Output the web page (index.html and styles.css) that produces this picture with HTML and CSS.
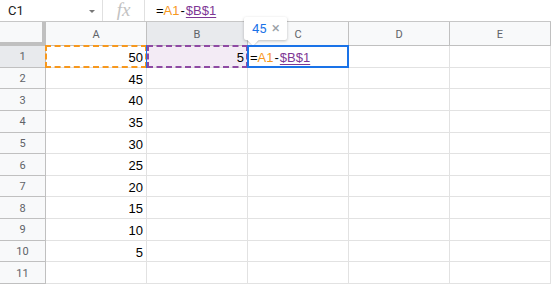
FILE: index.html
```html
<!DOCTYPE html>
<html lang="en">
<head>
    <meta charset="UTF-8">
    <meta name="viewport" content="width=device-width, initial-scale=1.0">
    <title>Sheet</title>
    <link rel="stylesheet" href="styles.css">
</head>
<body>

    <div class="formula-bar">
        <div class="name-box">
            <span>C1</span>
            <span class="caret"></span>
        </div>
        <div class="fx">fx</div>
        <div class="formula">=<span class="ref-a">A1</span><span class="minus">-</span><span class="ref-b">$B$1</span></div>
    </div>

    <div class="sheet">
        <div class="corner"></div>
        <div class="col-head">A</div>
        <div class="col-head active">B</div>
        <div class="col-head">C</div>
        <div class="col-head">D</div>
        <div class="col-head">E</div>

        <div class="row-head active">1</div>
        <div class="cell range-a">50</div>
        <div class="cell range-b">5</div>
        <div class="cell editing">
            =<span class="ref-a">A1</span><span class="minus">-</span><span class="ref-b">$B$1</span>
            <div class="tip"><span class="tip-value">45</span><span class="tip-close">&times;</span></div>
        </div>
        <div class="cell"></div>
        <div class="cell"></div>

        <div class="row-head">2</div>
        <div class="cell">45</div><div class="cell"></div><div class="cell"></div><div class="cell"></div><div class="cell"></div>
        <div class="row-head">3</div>
        <div class="cell">40</div><div class="cell"></div><div class="cell"></div><div class="cell"></div><div class="cell"></div>
        <div class="row-head">4</div>
        <div class="cell">35</div><div class="cell"></div><div class="cell"></div><div class="cell"></div><div class="cell"></div>
        <div class="row-head">5</div>
        <div class="cell">30</div><div class="cell"></div><div class="cell"></div><div class="cell"></div><div class="cell"></div>
        <div class="row-head">6</div>
        <div class="cell">25</div><div class="cell"></div><div class="cell"></div><div class="cell"></div><div class="cell"></div>
        <div class="row-head">7</div>
        <div class="cell">20</div><div class="cell"></div><div class="cell"></div><div class="cell"></div><div class="cell"></div>
        <div class="row-head">8</div>
        <div class="cell">15</div><div class="cell"></div><div class="cell"></div><div class="cell"></div><div class="cell"></div>
        <div class="row-head">9</div>
        <div class="cell">10</div><div class="cell"></div><div class="cell"></div><div class="cell"></div><div class="cell"></div>
        <div class="row-head">10</div>
        <div class="cell">5</div><div class="cell"></div><div class="cell"></div><div class="cell"></div><div class="cell"></div>
        <div class="row-head">11</div>
        <div class="cell"></div><div class="cell"></div><div class="cell"></div><div class="cell"></div><div class="cell"></div>
    </div>

</body>
</html>
```

FILE: styles.css
```css
body {
    margin: 0;
    padding: 0;
    background: #fff;
    font-family: 'Liberation Sans', Arial, sans-serif;
    color: #000;
    width: 551px;
    height: 284px;
    overflow: hidden;
}

.formula-bar {
    display: flex;
    align-items: center;
    height: 21px;
    border-bottom: 1px solid #c7c7c7;
    font-size: 13px;
}

.name-box {
    display: flex;
    align-items: center;
    justify-content: space-between;
    height: 100%;
    padding: 0 7px 0 8px;
    border-right: 1px solid #e0e0e0;
    box-sizing: border-box;
    width: 103px;
    font-family: Roboto, 'Liberation Sans', sans-serif;
    font-size: 13px;
    color: #222;
}

.caret {
    width: 0;
    height: 0;
    border-left: 3px solid transparent;
    border-right: 3px solid transparent;
    border-top: 3px solid #777;
    margin-top: 2px;
}

.fx {
    width: 42px;
    height: 100%;
    box-sizing: border-box;
    border-right: 1px solid #e0e0e0;
    text-align: center;
    font-family: 'Liberation Serif', serif;
    font-style: italic;
    font-size: 19px;
    line-height: 19px;
    color: #c2c2c2;
}

.formula {
    padding-left: 11px;
    line-height: 21px;
}

.ref-a {
    color: #f7981d;
}

.ref-b {
    color: #7e3794;
    text-decoration: underline;
    text-underline-offset: 2px;
}

.minus {
    padding: 0 1px;
}

.sheet {
    display: grid;
    grid-template-columns: 46px repeat(5, 101px);
    grid-template-rows: 24px repeat(11, 21.65px);
}

.corner {
    background: #f8f9fa;
    border-right: 4px solid #c0c0c0;
    border-bottom: 4px solid #c0c0c0;
}

.col-head,
.row-head {
    display: flex;
    align-items: center;
    justify-content: center;
    background: #f8f9fa;
    border-right: 1px solid #c0c0c0;
    border-bottom: 1px solid #c0c0c0;
    font-family: Roboto, 'Liberation Sans', sans-serif;
    font-size: 11px;
    color: #5f6368;
    box-sizing: border-box;
}

.col-head {
    padding-top: 2px;
}

.row-head {
    padding-top: 1px;
}

.col-head.active,
.row-head.active {
    background: #e8eaed;
}

.cell {
    position: relative;
    border-right: 1px solid #e2e2e2;
    border-bottom: 1px solid #e2e2e2;
    box-sizing: border-box;
    padding: 3px 3px 0 3px;
    text-align: right;
    font-size: 13px;
    line-height: 17px;
}

.range-a::after,
.range-b::after {
    content: "";
    position: absolute;
    top: -1px;
    left: -1px;
    right: -1px;
    bottom: -1px;
}

.range-a::after {
    border: 2px dashed #f7981d;
}

.range-b {
    background: #f3ebf5;
}

.range-b::after {
    border: 2px dashed #8e4aa3;
    left: 0;
}

.range-b::before {
    content: "";
    position: absolute;
    top: -1px;
    bottom: -1px;
    left: -1px;
    width: 1px;
    background: #1a73e8;
}

.editing {
    text-align: left;
    padding-left: 2px;
    z-index: 2;
}

.editing::after {
    content: "";
    position: absolute;
    top: -1px;
    left: -1px;
    right: -1px;
    bottom: -1px;
    border: 2px solid #1a73e8;
}

.tip {
    position: absolute;
    left: -4px;
    top: -29px;
    width: 43px;
    height: 23px;
    display: flex;
    align-items: center;
    gap: 5px;
    padding-left: 8px;
    box-sizing: border-box;
    background: #fff;
    border-radius: 2px;
    box-shadow: 0 1px 3px rgba(0, 0, 0, 0.25);
    font-family: Roboto, 'Liberation Sans', sans-serif;
}

.tip::after {
    content: "";
    position: absolute;
    left: 5px;
    bottom: -4px;
    width: 8px;
    height: 8px;
    background: #fff;
    transform: rotate(45deg);
    box-shadow: 1px 1px 1px rgba(0, 0, 0, 0.12);
}

.tip-value {
    font-size: 13px;
    color: #1a73e8;
}

.tip-close {
    font-size: 15px;
    color: #9aa0a6;
}
```
